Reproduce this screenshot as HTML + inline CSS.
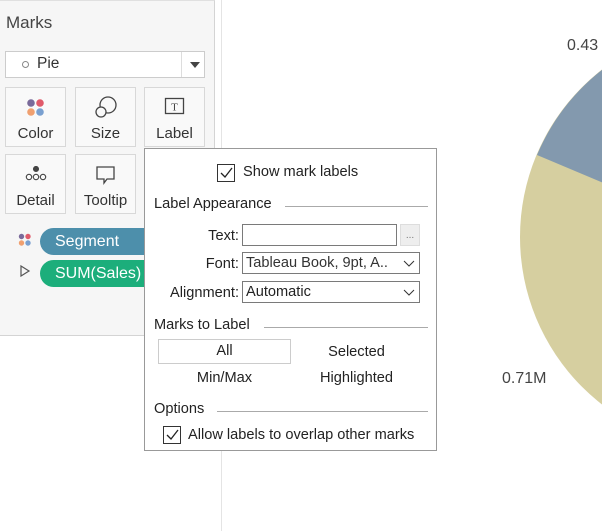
<!DOCTYPE html>
<html><head><style>
*{margin:0;padding:0;box-sizing:border-box}
body{width:602px;height:531px;position:relative;overflow:hidden;background:#fff;font-family:"Liberation Sans",Arial,sans-serif;color:#333}
.abs{position:absolute}
.panel{left:0;top:0;width:215px;height:336px;background:#f6f6f6;border-right:1px solid #d4d4d4;border-bottom:1px solid #d4d4d4;border-top:1px solid #e0e0e0}
.btn{position:absolute;width:61px;height:60px;background:#f9f9f9;border:1px solid #d8d8d8;font-size:15px;text-align:center}
.btn span{position:absolute;left:0;right:0;bottom:4px}
.pill{position:absolute;height:27px;border-radius:14px;color:#fff;font-size:16px;padding-left:15px;line-height:27px}
.pop{left:144px;top:148px;width:293px;height:303px;background:#fff;border:1px solid #999;font-size:14.6px;color:#222}
.cb{position:absolute;width:18px;height:18px;border:1px solid #333;background:#fff}
.hdr{position:absolute;left:9px;font-size:14.6px}
.line{position:absolute;height:1px;background:#aaa}
.fld{position:absolute;border:1px solid #7a7a7a;height:22px;font-size:14.6px;line-height:20px;padding-left:3px;background:#fff;white-space:nowrap;overflow:hidden}
.chev{position:absolute;right:4px;top:4px}
</style></head><body>
<div class="abs" style="left:221px;top:0;width:1px;height:531px;background:#e4e4e4"></div>
<div class="abs panel">
 <div class="abs" style="left:6px;top:12px;font-size:17px;color:#444">Marks</div>
 <div class="abs" style="left:5px;top:50px;width:200px;height:27px;border:1px solid #ccc;background:#fff">
  <div class="abs" style="left:16px;top:9px;width:7px;height:7px;border:1px solid #888;border-radius:50%"></div>
  <div class="abs" style="left:31px;top:3px;font-size:15.5px">Pie</div>
  <div class="abs" style="left:175px;top:0;width:1px;height:25px;background:#ddd"></div>
  <div class="abs" style="left:184px;top:10px;width:0;height:0;border-left:5px solid transparent;border-right:5px solid transparent;border-top:6px solid #444"></div>
 </div>
 <div class="btn" style="left:5px;top:86px">
  <svg class="abs" style="left:19px;top:9px" width="22" height="22"><circle cx="6" cy="6" r="3.8" fill="#7a6a9a"/><circle cx="15" cy="6" r="3.8" fill="#e05a6a"/><circle cx="6" cy="15" r="3.8" fill="#f0a070"/><circle cx="15" cy="15" r="3.8" fill="#7aa0d0"/></svg><span>Color</span></div>
 <div class="btn" style="left:75px;top:86px">
  <svg class="abs" style="left:17px;top:7px" width="26" height="26" fill="none" stroke="#444" stroke-width="1.3"><circle cx="15" cy="10" r="8"/><circle cx="8" cy="17" r="5" fill="#f9f9f9"/></svg><span>Size</span></div>
 <div class="btn" style="left:144px;top:86px">
  <svg class="abs" style="left:19px;top:9px" width="22" height="20"><rect x="1.5" y="1.5" width="18" height="15" fill="none" stroke="#444" stroke-width="1.3"/><text x="10.5" y="13.5" font-size="11" font-family="Liberation Serif" text-anchor="middle" fill="#444">T</text></svg><span>Label</span></div>
 <div class="btn" style="left:5px;top:153px">
  <svg class="abs" style="left:18px;top:11px" width="24" height="16" fill="none" stroke="#444" stroke-width="1.1"><circle cx="12" cy="3" r="2.5" fill="#444"/><circle cx="5" cy="11" r="2.7"/><circle cx="12" cy="11" r="2.7"/><circle cx="19" cy="11" r="2.7"/></svg><span>Detail</span></div>
 <div class="btn" style="left:75px;top:153px">
  <svg class="abs" style="left:19px;top:10px" width="22" height="22" fill="none" stroke="#444" stroke-width="1.3"><path d="M2 2h17v12h-7l-3 4v-4H2z"/></svg><span>Tooltip</span></div>
 <svg class="abs" style="left:18px;top:232px" width="14" height="14"><circle cx="3.5" cy="3.5" r="2.7" fill="#7a6a9a"/><circle cx="10" cy="3.5" r="2.7" fill="#e05a6a"/><circle cx="3.5" cy="10" r="2.7" fill="#f0a070"/><circle cx="10" cy="10" r="2.7" fill="#7aa0d0"/></svg>
 <div class="pill" style="left:40px;top:227px;width:150px;background:#4d8fab">Segment</div>
 <svg class="abs" style="left:19px;top:264px" width="12" height="12" fill="none" stroke="#555" stroke-width="1.2"><path d="M2 1l8 5-8 5z"/></svg>
 <div class="pill" style="left:40px;top:259px;width:150px;background:#1cae7b">SUM(Sales)</div>
</div>
<svg class="abs" style="left:0;top:0" width="602" height="531">
 <circle cx="732" cy="237" r="212" fill="#d6cfa0"/>
 <path d="M732 237 L537 155 A212 212 0 0 1 732 25 Z" fill="#8399ae"/>
 <text x="567" y="50" font-size="16" fill="#444" font-family="Liberation Sans">0.43</text>
 <text x="502" y="383" font-size="16" fill="#444" font-family="Liberation Sans">0.71M</text>
</svg>
<div class="abs pop">
 <div class="cb" style="left:72px;top:15px"><svg width="16" height="16"><path d="M3 8l4 4 7-9" fill="none" stroke="#222" stroke-width="1.3"/></svg></div>
 <div class="abs" style="left:98px;top:15px">Show mark labels</div>
 <div class="hdr" style="top:47px">Label Appearance</div><div class="line" style="left:140px;right:8px;top:57px"></div>
 <div class="abs" style="left:0;width:94px;text-align:right;top:79px">Text:</div>
 <div class="fld" style="left:97px;top:75px;width:155px"></div>
 <div class="abs" style="left:255px;top:75px;width:20px;height:22px;background:#eee;border:1px solid #ddd;font-size:10px;text-align:center;color:#777;line-height:22px">...</div>
 <div class="abs" style="left:0;width:94px;text-align:right;top:107px">Font:</div>
 <div class="fld" style="left:97px;top:103px;width:178px;color:#333">Tableau Book, 9pt, A..<svg class="chev" width="12" height="12"><path d="M1 4l5 5 5-5" fill="none" stroke="#333"/></svg></div>
 <div class="abs" style="left:0;width:94px;text-align:right;top:136px">Alignment:</div>
 <div class="fld" style="left:97px;top:132px;width:178px">Automatic<svg class="chev" width="12" height="12"><path d="M1 4l5 5 5-5" fill="none" stroke="#333"/></svg></div>
 <div class="hdr" style="top:168px">Marks to Label</div><div class="line" style="left:119px;right:8px;top:178px"></div>
 <div class="abs" style="left:13px;top:190px;width:133px;height:25px;border:1px solid #ccc;text-align:center;line-height:23px">All</div>
 <div class="abs" style="left:145px;width:133px;text-align:center;top:195px">Selected</div>
 <div class="abs" style="left:13px;width:133px;text-align:center;top:221px">Min/Max</div>
 <div class="abs" style="left:145px;width:133px;text-align:center;top:221px">Highlighted</div>
 <div class="hdr" style="top:252px">Options</div><div class="line" style="left:72px;right:8px;top:262px"></div>
 <div class="cb" style="left:18px;top:277px"><svg width="16" height="16"><path d="M3 8l4 4 7-9" fill="none" stroke="#222" stroke-width="1.3"/></svg></div>
 <div class="abs" style="left:43px;top:278px">Allow labels to overlap other marks</div>
</div>
</body></html>
